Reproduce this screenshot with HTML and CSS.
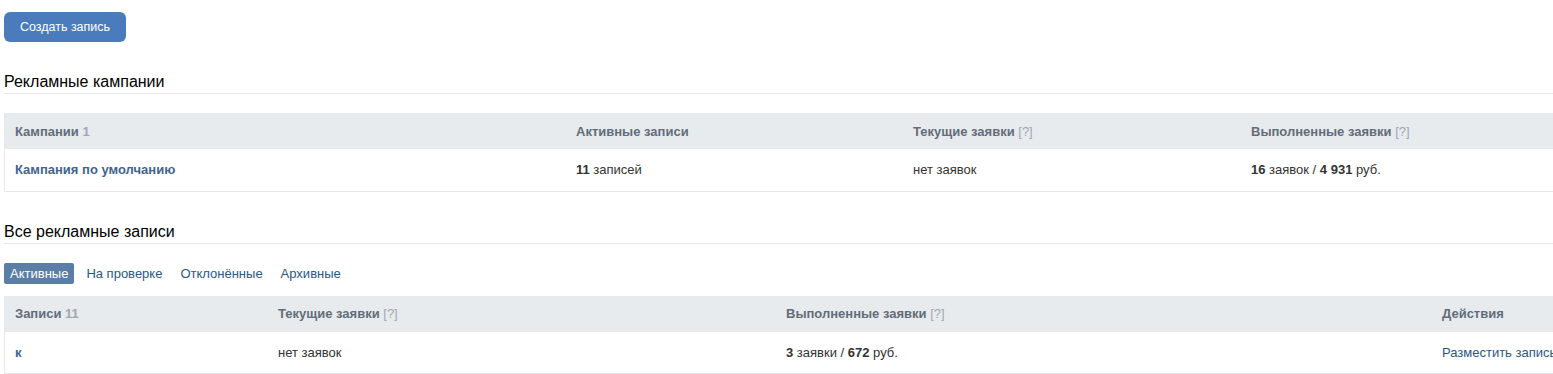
FILE: index.html
```html
<html>

<head>
    <link rel="stylesheet" href="styles.css">
</head>

<body>
    <div class="page">
        <button class="create_btn">Создать запись</button>

        <h2 class="section_title">Рекламные кампании</h2>
        <table class="grid grid_camps">
            <tr class="head">
                <td class="c1">Кампании <span class="count">1</span></td>
                <td class="c2">Активные записи</td>
                <td class="c3">Текущие заявки <span class="hint">[?]</span></td>
                <td class="c4">Выполненные заявки <span class="hint">[?]</span></td>
            </tr>
            <tr>
                <td class="name">Кампания по умолчанию</td>
                <td><b>11</b> записей</td>
                <td>нет заявок</td>
                <td><b>16</b> заявок / <b>4 931</b> руб.</td>
            </tr>
        </table>

        <h2 class="section_title">Все рекламные записи</h2>
        <div class="tabs">
            <a class="tab tab_sel">Активные</a>
            <a class="tab">На проверке</a>
            <a class="tab">Отклонённые</a>
            <a class="tab">Архивные</a>
        </div>
        <table class="grid grid_posts">
            <tr class="head">
                <td class="p1">Записи <span class="count">11</span></td>
                <td class="p2">Текущие заявки <span class="hint">[?]</span></td>
                <td class="p3">Выполненные заявки <span class="hint">[?]</span></td>
                <td class="p4">Действия</td>
            </tr>
            <tr>
                <td class="name">к</td>
                <td>нет заявок</td>
                <td><b>3</b> заявки / <b>672</b> руб.</td>
                <td class="action">Разместить запись</td>
            </tr>
        </table>
    </div>
</body>

</html>
```

FILE: styles.css
```css
html,
body {
    margin: 0;
    overflow: hidden;
    background: #fff;
}

body {
    font-family: "Liberation Sans", Arial, sans-serif;
    font-size: 12px;
    color: #000;
}

.page {
    width: 1596px;
    padding: 12px 0 0 4px;
}

.create_btn {
    background: #4a7cbd;
    color: #fff;
    border: 0;
    border-radius: 6px;
    height: 30px;
    width: 122px;
    font-family: "Liberation Sans", Arial, sans-serif;
    font-size: 12.5px;
    padding: 0;
}

.section_title {
    font-size: 16px;
    font-weight: normal;
    margin: 31px 0 0 0;
    padding-bottom: 2px;
    line-height: 18px;
    border-bottom: 1px solid #e7e8ec;
    color: #000;
}

.grid {
    width: 100%;
    border-collapse: collapse;
    table-layout: fixed;
    margin-top: 19px;
    border-left: 1px solid #e7e8ec;
    border-bottom: 1px solid #e7e8ec;
    font-family: "Liberation Sans", Arial, sans-serif;
    font-size: 13px;
}

.grid td {
    padding: 0 10px;
    height: 42px;
    color: #333;
    white-space: nowrap;
    overflow: visible;
}

.grid .head td {
    background: #e8ebee;
    height: 36px;
    font-weight: bold;
    color: #626d7a;
}

.grid b {
    color: #333;
}

.count,
.hint {
    color: #9ea8b3;
}

.hint {
    font-weight: normal;
}

.grid .name {
    font-weight: bold;
    color: #42648b;
}

.c1 { width: 541px; }
.c2 { width: 317px; }
.c3 { width: 318px; }

.p1 { width: 243px; }
.p2 { width: 488px; }
.p3 { width: 636px; }

.grid .action {
    color: #2a5885;
}

.grid_posts {
    margin-top: 12px;
}

.tabs {
    display: flex;
    margin-top: 19px;
}

.tab {
    font-size: 13px;
    color: #2a5885;
    padding: 4px 6px;
    margin-right: 6px;
    border-radius: 2px;
    line-height: 13px;
}

.tab_sel {
    background: #5b7ea6;
    color: #fff;
}
```
